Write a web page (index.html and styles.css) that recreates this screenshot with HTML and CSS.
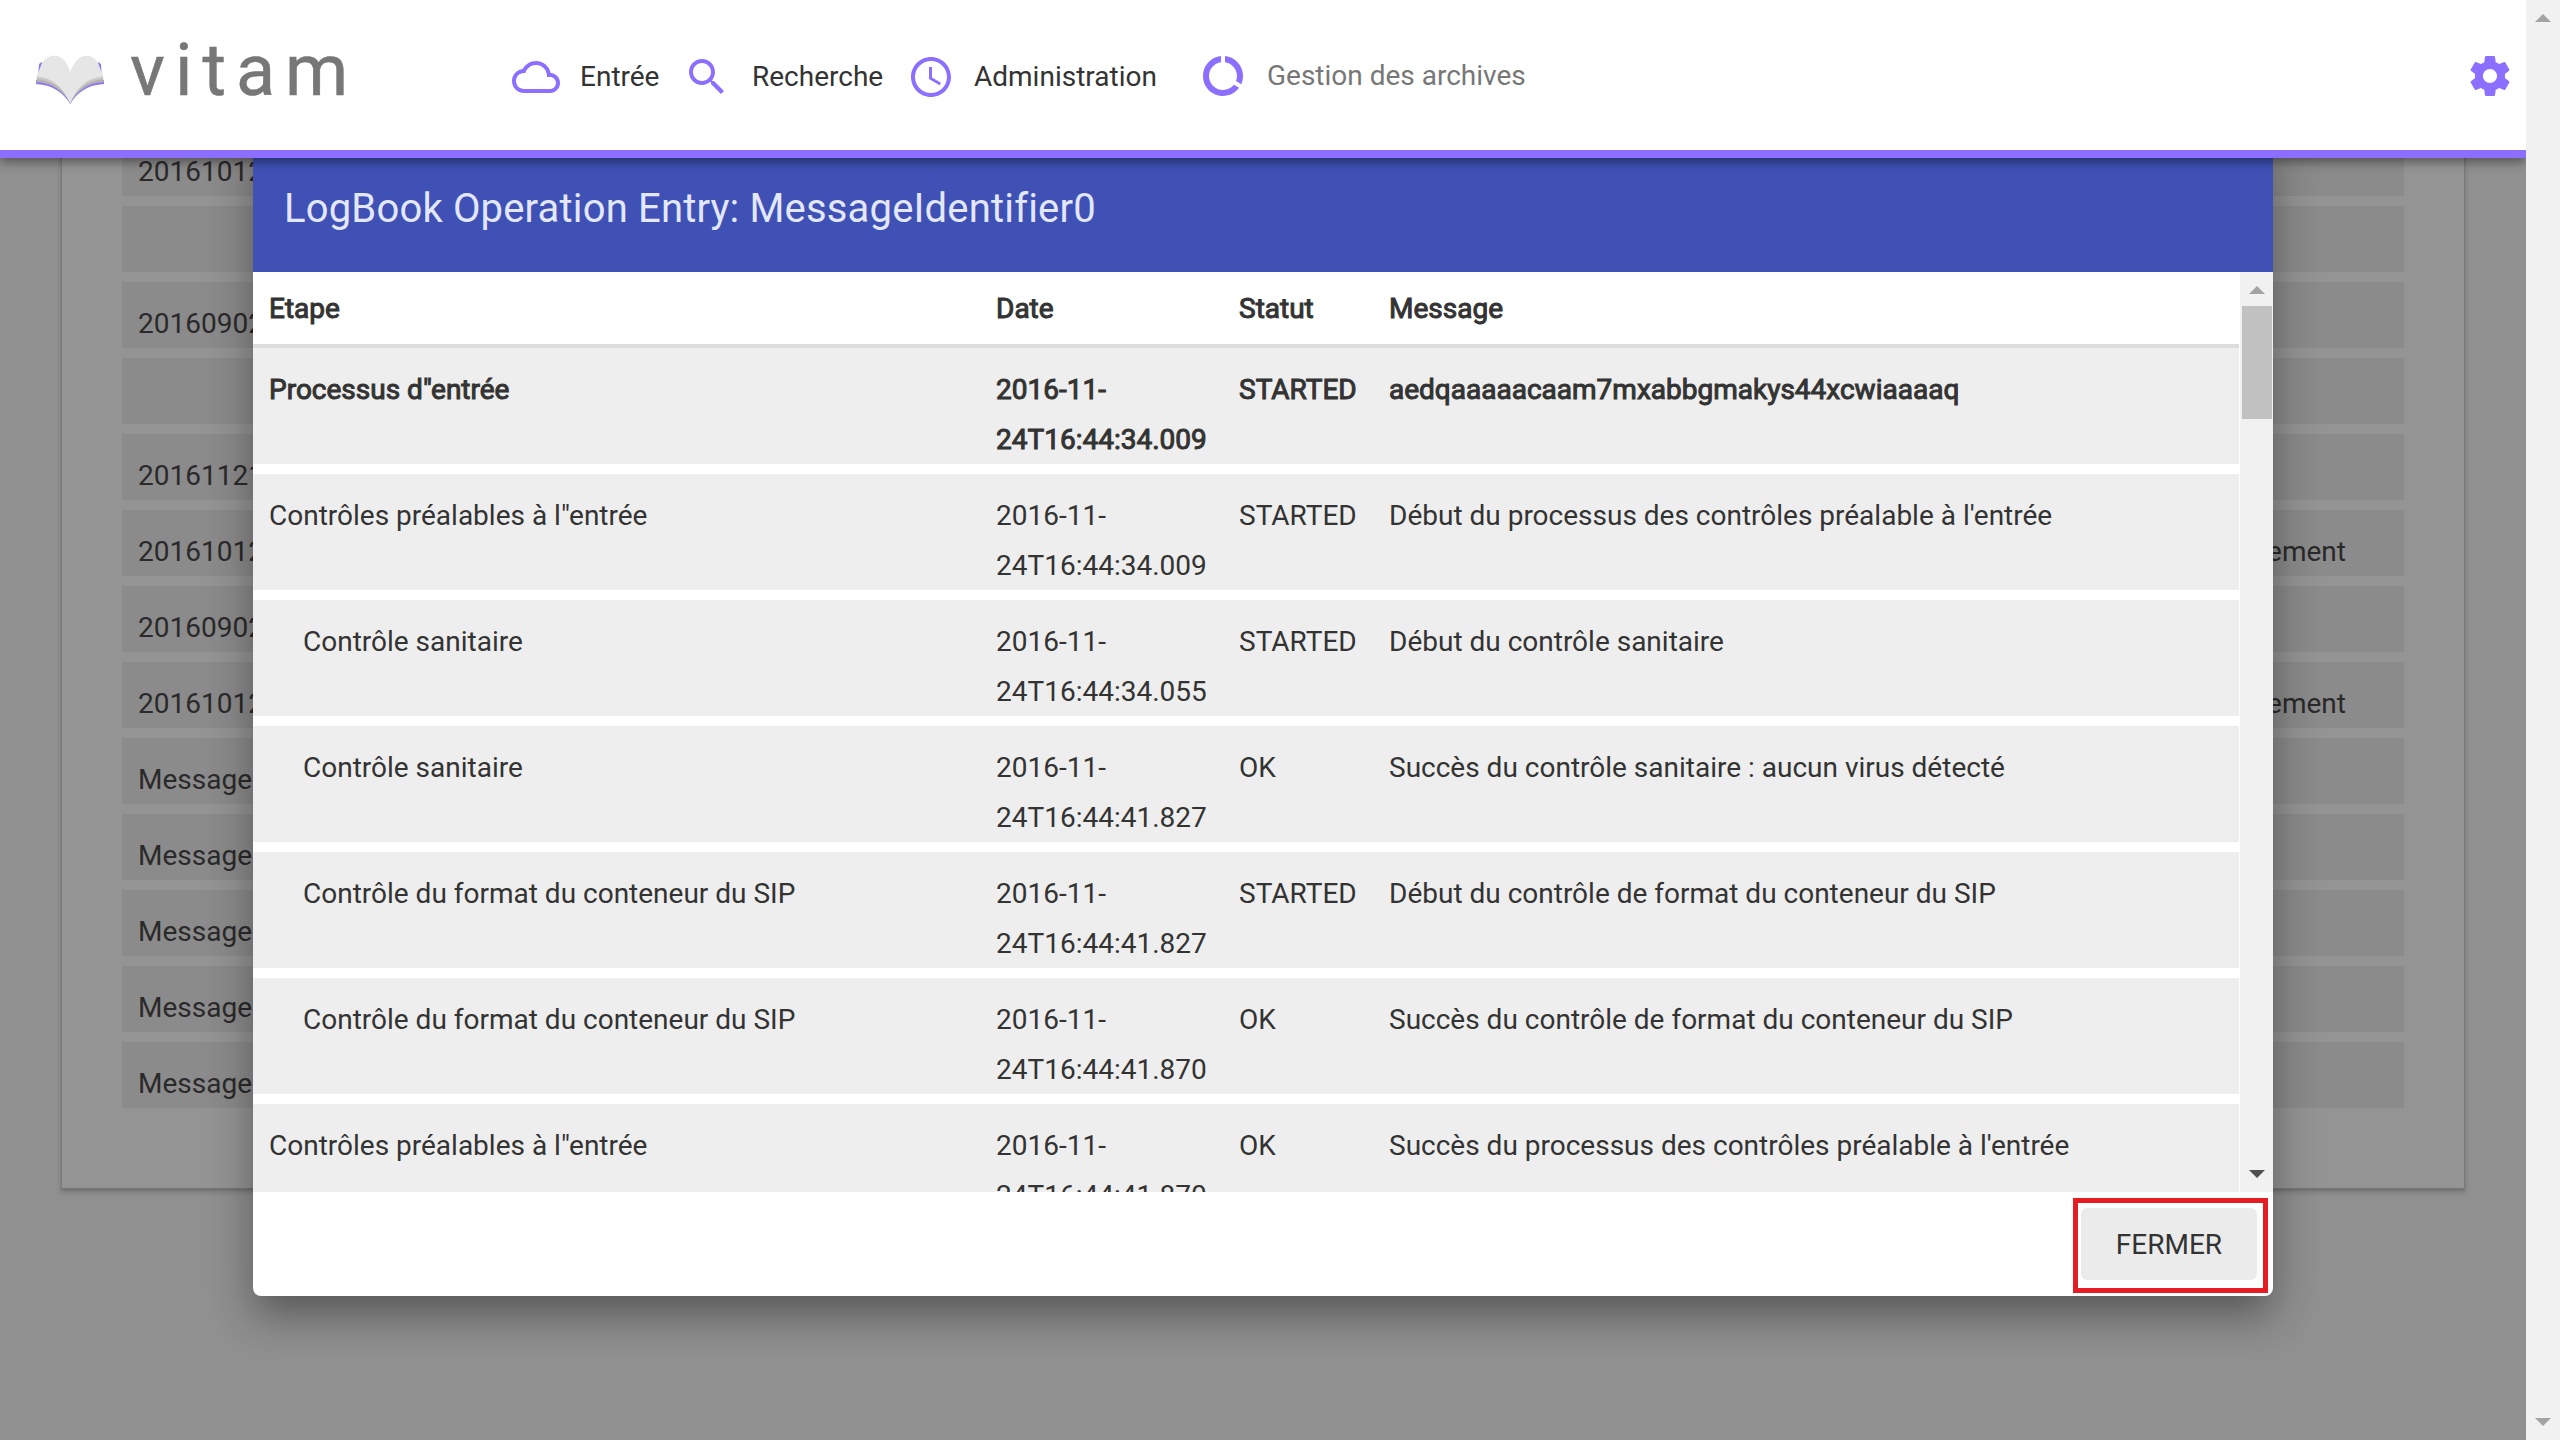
FILE: index.html
```html
<!DOCTYPE html>
<html lang="fr">
<head>
<meta charset="utf-8">
<title>Vitam</title>
<link rel="stylesheet" href="styles.css">
</head>
<body>
<div class="page">
  <header class="topbar">
    <svg class="logo-mark" viewBox="0 0 68 50">
      <path fill="#8f79ee" d="M6 7L3 9L2 24H8ZM62 7L65 9L66 24H60ZM0 25H68V29C52 30 41 37 34.3 49C27 37 16 30 0 29Z"/>
      <path fill="#b4b3b2" d="M2 20H66L68 27C52 27.500 41 36 34.300 48C27 36 16 27.500 0 27Z"/>
      <path fill="#cbcac9" d="M2 18H66L67.500 24C52 25 41 34 34.300 47C27 34 16 25 .5 24Z"/>
      <path fill="#e6e6e6" d="M5.500 9C9 3 14 .5 19 .7C27 1 32 9 34.300 17C37 9 42 1 50 .7C55 .5 59 3 62.500 9L67 21.500C50 23 41 33 34.300 48.300C27 33 18 23 1 21.500Z"/>
    </svg>
    <span class="logo-text">vitam</span>
    <nav class="menu">
      <a class="item entry">
        <svg class="icon" viewBox="0 0 24 24"><path d="M19.35 10.04C18.67 6.59 15.64 4 12 4 9.11 4 6.6 5.64 5.35 8.04 2.34 8.36 0 10.91 0 14c0 3.31 2.69 6 6 6h13c2.76 0 5-2.24 5-5 0-2.64-2.05-4.78-4.65-4.96zM19 18H6c-2.21 0-4-1.79-4-4s1.79-4 4-4h.71C7.37 7.69 9.48 6 12 6c3.04 0 5.5 2.46 5.5 5.5v.5H19c1.66 0 3 1.34 3 3s-1.34 3-3 3z"/></svg>
        <span>Entrée</span>
      </a>
      <a class="item search">
        <svg class="icon" viewBox="0 0 24 24"><path d="M15.5 14h-.79l-.28-.27C15.41 12.59 16 11.11 16 9.5 16 5.91 13.09 3 9.5 3S3 5.91 3 9.5 5.91 16 9.5 16c1.61 0 3.09-.59 4.23-1.57l.27.28v.79l5 4.99L20.49 19l-4.99-5zm-6 0C7.01 14 5 11.99 5 9.5S7.01 5 9.5 5 14 7.01 14 9.5 11.99 14 9.5 14z"/></svg>
        <span>Recherche</span>
      </a>
      <a class="item admin">
        <svg class="icon" viewBox="0 0 24 24"><path d="M11.99 2C6.47 2 2 6.48 2 12s4.47 10 9.99 10C17.52 22 22 17.52 22 12S17.52 2 11.99 2zM12 20c-4.42 0-8-3.58-8-8s3.58-8 8-8 8 3.58 8 8-3.58 8-8 8zm.5-13H11v6l5.25 3.15.75-1.23-4.5-2.67z"/></svg>
        <span>Administration</span>
      </a>
      <a class="item archives">
        <svg class="icon" viewBox="0 0 24 24"><path d="M13 2.05v3.03c3.39.49 6 3.39 6 6.92 0 .9-.18 1.75-.48 2.54l2.6 1.53c.56-1.24.88-2.62.88-4.07 0-5.18-3.95-9.45-9-9.95zM12 19c-3.87 0-7-3.13-7-7 0-3.53 2.61-6.43 6-6.92V2.05c-5.06.5-9 4.76-9 9.95 0 5.52 4.47 10 9.99 10 3.31 0 6.24-1.61 8.06-4.09l-2.6-1.53C16.17 17.98 14.21 19 12 19z"/></svg>
        <span>Gestion des archives</span>
      </a>
    </nav>
    <svg class="icon gear" viewBox="0 0 24 24"><path d="M19.43 12.98c.04-.32.07-.64.07-.98s-.03-.66-.07-.98l2.11-1.65c.19-.15.24-.42.12-.64l-2-3.46c-.12-.22-.39-.3-.61-.22l-2.49 1c-.52-.4-1.08-.73-1.69-.98l-.38-2.65C14.46 2.18 14.25 2 14 2h-4c-.25 0-.46.18-.49.42l-.38 2.65c-.61.25-1.17.59-1.69.98l-2.49-1c-.23-.09-.49 0-.61.22l-2 3.46c-.13.22-.07.49.12.64l2.11 1.65c-.04.32-.07.65-.07.98s.03.66.07.98l-2.11 1.65c-.19.15-.24.42-.12.64l2 3.46c.12.22.39.3.61.22l2.49-1c.52.4 1.08.73 1.69.98l.38 2.65c.03.24.24.42.49.42h4c.25 0 .46-.18.49-.42l.38-2.65c.61-.25 1.17-.59 1.69-.98l2.49 1c.23.09.49 0 .61-.22l2-3.46c.12-.22.07-.49-.12-.64l-2.11-1.65zM12 15.5c-1.93 0-3.5-1.57-3.5-3.5s1.57-3.5 3.5-3.5 3.5 1.57 3.5 3.5-1.57 3.5-3.5 3.5z"/></svg>
  </header>

  <main class="content">
    <section class="card">
      <div class="entry-row"><span>20161012</span></div>
      <div class="entry-row"></div>
      <div class="entry-row"><span>20160902</span></div>
      <div class="entry-row"></div>
      <div class="entry-row"><span>20161121</span></div>
      <div class="entry-row"><span>20161012</span><span>Versement</span></div>
      <div class="entry-row"><span>20160902</span></div>
      <div class="entry-row"><span>20161012</span><span>Versement</span></div>
      <div class="entry-row"><span>MessageI</span></div>
      <div class="entry-row"><span>MessageI</span></div>
      <div class="entry-row"><span>MessageI</span></div>
      <div class="entry-row"><span>MessageI</span></div>
      <div class="entry-row"><span>MessageI</span></div>
    </section>
  </main>

  <section class="dialog">
    <h2 class="dialog-title">LogBook Operation Entry: MessageIdentifier0</h2>
    <div class="dialog-body">
      <div class="log">
        <div class="log-head strong"><span>Etape</span><span>Date</span><span>Statut</span><span>Message</span></div>
        <div class="log-row strong"><span>Processus d"entrée</span><span>2016-11-<br>24T16:44:34.009</span><span>STARTED</span><span>aedqaaaaacaam7mxabbgmakys44xcwiaaaaq</span></div>
        <div class="log-row"><span>Contrôles préalables à l"entrée</span><span>2016-11-<br>24T16:44:34.009</span><span>STARTED</span><span>Début du processus des contrôles préalable à l'entrée</span></div>
        <div class="log-row"><span class="sub">Contrôle sanitaire</span><span>2016-11-<br>24T16:44:34.055</span><span>STARTED</span><span>Début du contrôle sanitaire</span></div>
        <div class="log-row"><span class="sub">Contrôle sanitaire</span><span>2016-11-<br>24T16:44:41.827</span><span>OK</span><span>Succès du contrôle sanitaire : aucun virus détecté</span></div>
        <div class="log-row"><span class="sub">Contrôle du format du conteneur du SIP</span><span>2016-11-<br>24T16:44:41.827</span><span>STARTED</span><span>Début du contrôle de format du conteneur du SIP</span></div>
        <div class="log-row"><span class="sub">Contrôle du format du conteneur du SIP</span><span>2016-11-<br>24T16:44:41.870</span><span>OK</span><span>Succès du contrôle de format du conteneur du SIP</span></div>
        <div class="log-row"><span>Contrôles préalables à l"entrée</span><span>2016-11-<br>24T16:44:41.870</span><span>OK</span><span>Succès du processus des contrôles préalable à l'entrée</span></div>
      </div>
      <div class="scroll inner">
        <svg class="arrow" viewBox="0 0 16 8"><path d="M0 8L8 0L16 8Z"/></svg>
        <div class="thumb"></div>
        <svg class="arrow active" viewBox="0 0 16 8"><path d="M0 0H16L8 8Z"/></svg>
      </div>
    </div>
    <footer class="dialog-actions">
      <div class="highlight"><button class="close">FERMER</button></div>
    </footer>
  </section>
</div>
<div class="scroll outer">
  <svg class="arrow" viewBox="0 0 16 8"><path d="M0 8L8 0L16 8Z"/></svg>
  <svg class="arrow" viewBox="0 0 16 8"><path d="M0 0H16L8 8Z"/></svg>
</div>
</body>
</html>
```
FILE: styles.css
```css
* { box-sizing: border-box; }

body {
  margin: 0;
  width: 2560px;
  height: 1440px;
  overflow: hidden;
  display: flex;
  font: 28px/50px Roboto, sans-serif;
  color: #333;
}

.page {
  position: relative;
  width: 2526px;
  height: 1440px;
  background: #909090;
  overflow: hidden;
}

/* Top bar */
.topbar {
  position: relative;
  z-index: 3;
  display: flex;
  align-items: center;
  height: 158px;
  padding: 0 12px 0 36px;
  background: #fff;
  border-bottom: 8px solid #8c6fff;
  box-shadow: 0 4px 10px rgba(0, 0, 0, .42);
}
.logo-mark { width: 68px; height: 50px; margin-top: 10px; }
.logo-text {
  width: 382px;
  margin: -8px 0 0 26px;
  font-size: 72px;
  line-height: 80px;
  letter-spacing: 10px;
  color: #777;
  -webkit-text-stroke: .5px #777;
}
.menu { display: flex; flex: 1; margin-top: 4px; }
.item { display: flex; align-items: center; height: 50px; gap: 20px; white-space: nowrap; }
.icon { width: 48px; height: 48px; fill: #8c6fff; flex: none; }
.gear { margin-top: 2px; }
.entry { width: 171px; gap: 20px; }
.search { width: 224px; gap: 21px; }
.admin { width: 292px; gap: 19px; }
.archives { margin-top: -1px; color: #777; }

/* Page content, dimmed behind the dialog */
.content { padding: 0 62px; }
.card {
  height: 1058px;
  margin-top: -28px;
  padding: 0 60px;
  background: #949494;
  box-shadow: 0 3px 4px 2px rgba(0, 0, 0, .14), 0 2px 0 1px rgba(0, 0, 0, .05);
}
.entry-row {
  display: flex;
  justify-content: space-between;
  height: 66px;
  margin-bottom: 10px;
  padding: 17px 58px 0 16px;
  background: #8b8b8b;
  color: #2a2a2a;
}

/* Dialog */
.dialog {
  position: absolute;
  z-index: 2;
  left: 253px;
  top: 140px;
  width: 2020px;
  height: 1156px;
  display: flex;
  flex-direction: column;
  background: #fff;
  border-radius: 0 0 8px 8px;
  box-shadow: 0 22px 30px -14px rgba(0, 0, 0, .2), 0 24px 40px 3px rgba(0, 0, 0, .15), 0 9px 46px 8px rgba(0, 0, 0, .12);
}
.dialog-title {
  margin: 0;
  height: 132px;
  padding: 44px 31px 0;
  font-size: 40px;
  font-weight: 400;
  letter-spacing: .17px;
  background: #3f51b5;
  color: #e3e7fc;
}
.dialog-body { display: flex; height: 920px; overflow: hidden; }
.log { width: 1986px; }
.log-head, .log-row {
  display: grid;
  grid-template-columns: 727px 243px 150px 1fr;
  padding-left: 16px;
}
.log-head {
  height: 76px;
  padding-top: 12px;
  border-bottom: 4px solid #ddd;
}
.log-row {
  height: 116px;
  margin-bottom: 10px;
  padding-top: 17px;
  background: #eee;
}
.strong { -webkit-text-stroke: 1px #333; }
.sub { padding-left: 34px; }

/* Scroll bars */
.scroll { display: flex; flex-direction: column; align-items: center; background: #f1f1f1; }
.outer { width: 34px; height: 1440px; justify-content: space-between; padding: 14px 0; }
.inner { width: 33px; margin-left: 1px; padding: 14px 0; }
.arrow { width: 16px; height: 8px; fill: #a3a3a3; flex: none; }
.active { fill: #505050; margin-top: auto; }
.thumb { width: 30px; height: 113px; margin-top: 12px; background: #c1c1c1; }

.dialog-actions { display: flex; justify-content: flex-end; padding: 6px 5px 0 0; }
.highlight { width: 195px; height: 95px; border: 5px solid #e51c24; padding: 5px 5px 8px 3px; }
.close {
  display: block;
  width: 176px;
  height: 72px;
  padding: 1px 0 0;
  border: 0;
  border-radius: 6px;
  background: #ebebeb;
  color: #333;
  font: 28px/71px Roboto, sans-serif;
}
```
